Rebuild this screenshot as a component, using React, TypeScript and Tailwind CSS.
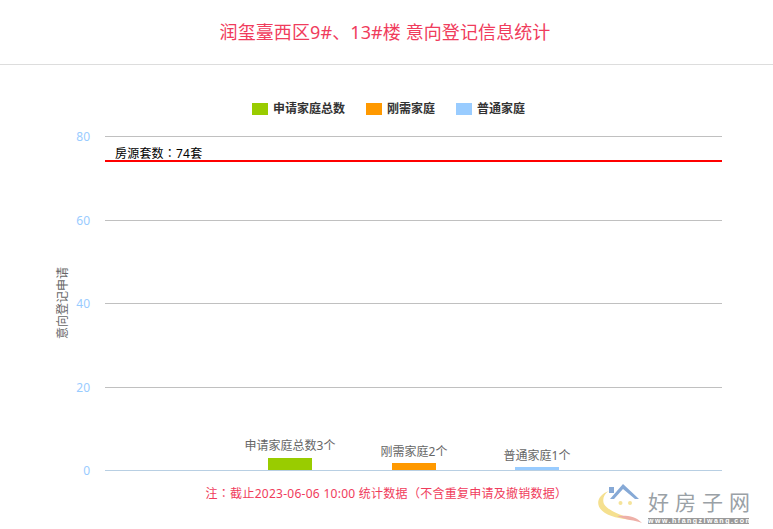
const legend = [
  { name: "申请家庭总数", color: "bg-[#99cc00]" },
  { name: "刚需家庭", color: "bg-[#ff9900]" },
  { name: "普通家庭", color: "bg-[#99ccff]" },
];

const ticks = [
  { label: "80", y: 136 },
  { label: "60", y: 220 },
  { label: "40", y: 303 },
  { label: "20", y: 387 },
];

const bars = [
  { label: "申请家庭总数3个", x: 268, y: 458, labelY: 450, fill: "#99cc00" },
  { label: "刚需家庭2个", x: 392, y: 463, labelY: 456, fill: "#ff9900" },
  { label: "普通家庭1个", x: 515, y: 467, labelY: 460, fill: "#99ccff" },
];

const Watermark = () => (
  <div className="absolute left-[595px] top-[482px] flex items-start">
    <svg width="53" height="44" viewBox="0 0 53 44">
      <path d="M14 9 C2 13 -1 24 10 31 C18 36 30 37 38 38 C28 33 14 30 9 22 C7 17 9 12 14 9Z" fill="#f5e08f" />
      <path d="M22 34 C31 33 41 34 47 41 C40 38 30 38 22 34Z" fill="#eeb0a8" />
      <path d="M15 17 L28 2 L44 17 L40 17 L28 7 L19 17Z" fill="#86a9d6" />
      <rect x="14" y="5" width="5" height="6" fill="#86a9d6" />
      <circle cx="25.5" cy="21" r="2" fill="#f5e39a" />
      <circle cx="35" cy="21" r="2" fill="#f5e39a" />
    </svg>
    <div className="flex flex-col pt-[7px]">
      <div className="h-[26px] text-[21px] leading-[26px] tracking-[6px] text-[#9aa1a6] whitespace-nowrap">好房子网</div>
      <div className="mt-[3px] h-[6px] w-[101px] bg-[#9a9a9a] text-white text-[7px] leading-[6px] font-bold font-['Liberation_Sans',sans-serif] tracking-[1.5px] whitespace-nowrap">
        www.hfangziwang.com
      </div>
    </div>
  </div>
);

export default function App() {
  return (
    <div className="relative w-[773px] h-[529px] overflow-hidden bg-white font-['Noto_Sans','Noto_Sans_CJK_SC',sans-serif]">
      {/* Header */}
      <div className="h-[65px] pr-[3px] border-b border-[#dddddd] flex items-center justify-center text-[18px] tracking-[0.1px] text-[#f03c5c]">
        润玺臺西区9#、13#楼 意向登记信息统计
      </div>

      {/* Legend */}
      <div className="mt-[34px] h-[20px] flex items-center pl-[252px] gap-[21px]">
        {legend.map((item) => (
          <div key={item.name} className="flex items-center gap-[5px]">
            <span className={`w-[16px] h-[12px] ${item.color}`} />
            <span className="text-[12px] font-bold text-[#333333]">{item.name}</span>
          </div>
        ))}
      </div>

      {/* Chart */}
      <svg className="block" width="773" height="361" viewBox="0 119 773 361">
        {ticks.map((t) => (
          <g key={t.label}>
            <line x1="105" x2="722" y1={t.y + 0.5} y2={t.y + 0.5} stroke="#c0c0c0" />
            <text x="90" y={t.y + 5} textAnchor="end" fontSize="12" fill="#99ccff">
              {t.label}
            </text>
          </g>
        ))}
        <text x="90" y="475" textAnchor="end" fontSize="12" fill="#99ccff">
          0
        </text>
        <text
          transform="translate(67 303) rotate(-90)"
          textAnchor="middle"
          fontSize="12"
          fill="#666666"
        >
          意向登记申请
        </text>

        <line x1="105" x2="722" y1="161" y2="161" stroke="#ff0000" strokeWidth="2" />
        <text
          x="115"
          y="158"
          fontSize="12"
          fill="#000000"
          className="tracking-[0.2px] font-['Noto_Sans','Noto_Sans_CJK_TC',sans-serif]"
        >
          房源套数：74套
        </text>

        {bars.map((b) => (
          <g key={b.label}>
            <rect x={b.x} y={b.y} width="44" height={470 - b.y} fill={b.fill} />
            <text x={b.x + 22} y={b.labelY} textAnchor="middle" fontSize="12" fill="#666666">
              {b.label}
            </text>
          </g>
        ))}
        <line x1="105" x2="722" y1="470.5" y2="470.5" stroke="#b8cfe3" />
      </svg>

      {/* Footnote */}
      <div className="h-[28px] flex items-center justify-center text-[12px] tracking-[0.27px] text-[#f03c5c] font-['Noto_Sans','Noto_Sans_CJK_TC',sans-serif]">
        注：截止2023-06-06 10:00 统计数据（不含重复申请及撤销数据）
      </div>

      <Watermark />
    </div>
  );
}
